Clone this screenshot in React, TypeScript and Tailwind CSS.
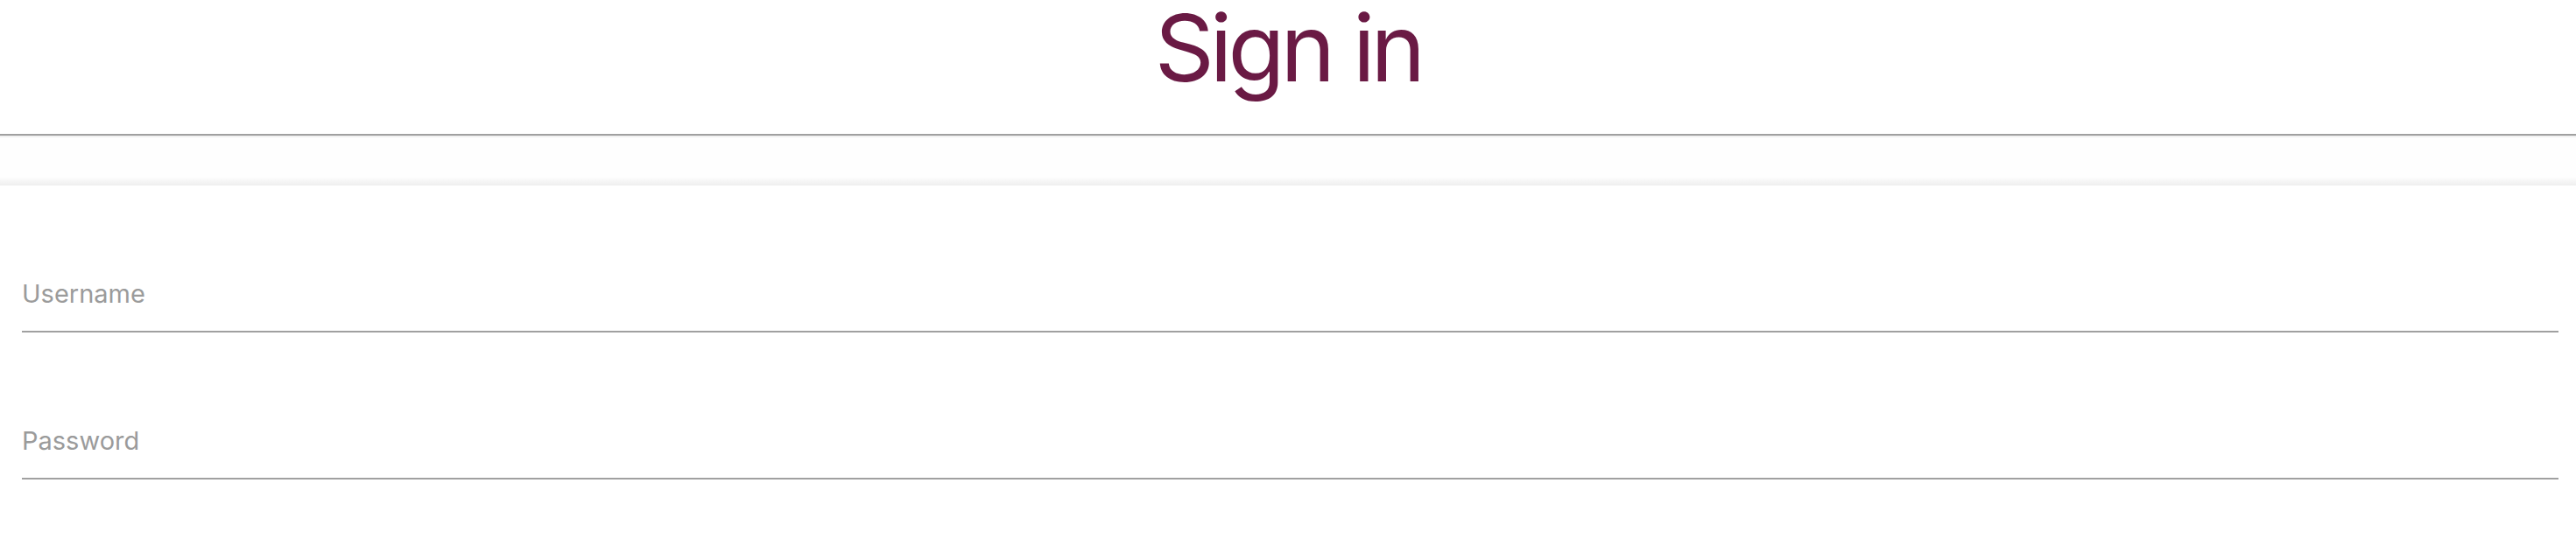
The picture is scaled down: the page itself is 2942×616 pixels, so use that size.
import { useState } from "react";

function Field({ type, placeholder }: { type: string; placeholder: string }) {
  const [value, setValue] = useState("");
  return (
    <div className="h-[168px] flex flex-col justify-end">
      <div className="border-b-2 border-[#a0a0a0] pb-[25px]">
        <input
          type={type}
          value={value}
          onChange={(e) => setValue(e.target.value)}
          placeholder={placeholder}
          className="block w-full h-[35px] leading-[35px] p-0 bg-transparent outline-none text-[29px] text-[#333] placeholder:text-[#9b9b9b]"
        />
      </div>
    </div>
  );
}

export default function App() {
  return (
    <div className="min-h-[616px] bg-white font-['Inter','Liberation_Sans',sans-serif]">
      {/* header */}
      <header className="h-[155px] border-b-2 border-[#a0a0a0] flex justify-center">
        <h1 className="text-[106px] leading-[110px] text-[#6a1a44] font-normal tracking-[-5px]">
          Sign in
        </h1>
      </header>

      {/* toolbar band with soft shadow */}
      <div className="h-[57px] bg-[#fefefe] border-t-2 border-[#f1f1f1] flex flex-col justify-end">
        <div className="h-[10px] bg-gradient-to-b from-[#fefefe] to-[#eeeeee]" />
      </div>

      <form className="pl-[25px] pr-[20px]" onSubmit={(e) => e.preventDefault()}>
        <Field type="text" placeholder="Username" />
        <Field type="password" placeholder="Password" />
      </form>
    </div>
  );
}
